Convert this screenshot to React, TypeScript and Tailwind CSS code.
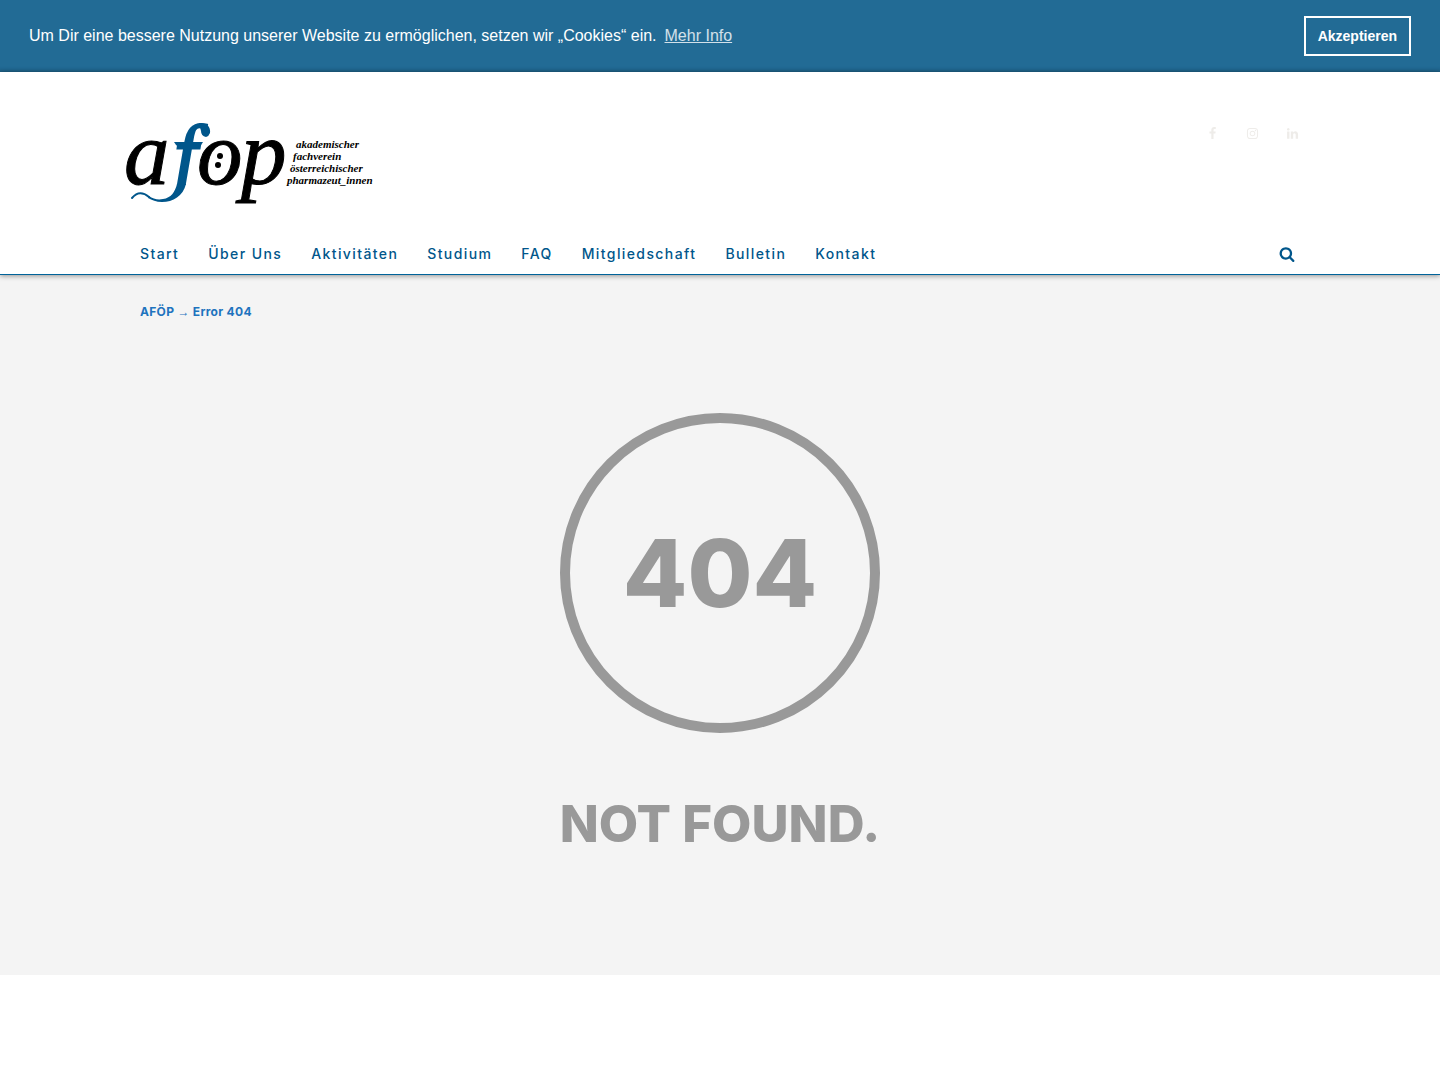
import type { ReactNode } from "react";

const navItems = [
  "Start",
  "Über Uns",
  "Aktivitäten",
  "Studium",
  "FAQ",
  "Mitgliedschaft",
  "Bulletin",
  "Kontakt",
];

const socials = [
  {
    label: "Facebook",
    path: "M1343 12v264h-157q-86 0-116 36t-30 108v189h293l-39 296h-254v759h-306v-759h-255v-296h255v-218q0-186 104-288.5t277-102.5q147 0 228 12z",
  },
  {
    label: "Instagram",
    path: "M1152 896q0-106-75-181t-181-75-181 75-75 181 75 181 181 75 181-75 75-181zm138 0q0 164-115 279t-279 115-279-115-115-279 115-279 279-115 279 115 115 279zm108-410q0 38-27 65t-65 27-65-27-27-65 27-65 65-27 65 27 27 65zm-502-220q-7 0-76.5-.5t-105.5 0-96.5 3-103 10-71.5 18.5q-50 20-88 58t-58 88q-11 29-18.5 71.5t-10 103-3 96.5 0 105.5.5 76.5-.5 76.5 0 105.5 3 96.5 10 103 18.5 71.5q20 50 58 88t88 58q29 11 71.5 18.5t103 10 96.5 3 105.5 0 76.5-.5 76.5.5 105.5 0 96.5-3 103-10 71.5-18.5q50-20 88-58t58-88q11-29 18.5-71.5t10-103 3-96.5 0-105.5-.5-76.5.5-76.5 0-105.5-3-96.5-10-103-18.5-71.5q-20-50-58-88t-88-58q-29-11-71.5-18.5t-103-10-96.5-3-105.5 0-76.5.5zm768 630q0 229-5 317-10 208-124 322t-322 124q-88 5-317 5t-317-5q-208-10-322-124t-124-322q-5-88-5-317t5-317q10-208 124-322t322-124q88-5 317-5t317 5q208 10 322 124t124 322q5 88 5 317z",
  },
  {
    label: "LinkedIn",
    path: "M477 625v991h-330v-991h330zm21-306q1 73-50.5 122t-135.5 49h-2q-82 0-132-49t-50-122q0-74 51.5-122.5t134.5-48.5 133 48.5 51 122.5zm1166 729v568h-329v-530q0-105-40.5-164.5t-126.5-59.5q-63 0-105.5 34.5t-63.5 85.5q-11 30-11 81v553h-329q2-399 2-647t-1-296l-1-48h329v144h-2q20-32 41-56t56.5-52 87-43.5 114.5-15.5q171 0 275 113.5t104 332.5z",
  },
];

const searchPath =
  "M1216 832q0-185-131.5-316.5t-316.5-131.5-316.5 131.5-131.5 316.5 131.5 316.5 316.5 131.5 316.5-131.5 131.5-316.5zm512 832q0 52-38 90t-90 38q-54 0-90-38l-343-342q-179 124-399 124-143 0-273.5-55.5t-225-150-150-225-55.5-273.5 55.5-273.5 150-225 225-150 273.5-55.5 273.5 55.5 225 150 150 225 55.5 273.5q0 220-124 399l343 343q37 37 37 90z";

function Icon({ path, className }: { path: string; className: string }) {
  return (
    <svg viewBox="0 0 1792 1792" fill="currentColor" className={className} aria-hidden="true">
      <path d={path} />
    </svg>
  );
}

function Container({ children, className = "" }: { children: ReactNode; className?: string }) {
  return <div className={`mx-auto max-w-[1190px] ${className}`}>{children}</div>;
}

function Logo() {
  return (
    <svg
      viewBox="0 0 248 80"
      className="h-20 w-[248px] overflow-visible font-['Liberation_Serif',serif] italic"
      role="img"
      aria-label="aföp"
    >
      <g fill="#00568b">
        <text x="49" y="62" fontSize="84" stroke="#00568b" strokeWidth="2">
          f
        </text>
        {/* crossbar bowl, drop at the top, wave that runs into the foot */}
        <path d="M49 20q3 6 11 7h8q7-1 10-7z" />
        <path d="M74 1q12 0 11 10-1 3-4 4-5-1-5-6z" />
        <path d="M44 63h22v20H44z" fill="#fff" />
        <path
          d="M7 76c5-6 11-6 17-1"
          fill="none"
          stroke="#00568b"
          strokeWidth="2"
          strokeLinecap="round"
        />
        <path d="M61 62C58 74 48 80 37 80C31 80 27 78 23 76L24 74C28 77 33 78 38 77C46 76 50 70 52 62z" />
      </g>
      <g fontSize="91" stroke="#000" strokeWidth="1">
        <text x="-1" y="62">a</text>
        <text x="72" y="62">o</text>
        <text x="116" y="62">p</text>
      </g>
      <circle cx="95" cy="34" r="3" />
      <circle cx="93" cy="43" r="3" />
      <g fontSize="11" fontWeight="700">
        <text x="171" y="26">akademischer</text>
        <text x="168" y="38">fachverein</text>
        <text x="165" y="50">österreichischer</text>
        <text x="162" y="62">pharmazeut_innen</text>
      </g>
    </svg>
  );
}

function CookieBar() {
  return (
    <div className="flex items-center justify-between bg-[#226b95] px-[29px] py-4 font-['Liberation_Sans',sans-serif] text-white shadow-[inset_0_-8px_4px_-7px_#1b5578]">
      <p className="text-base">
        Um Dir eine bessere Nutzung unserer Website zu ermöglichen, setzen wir „Cookies“ ein.
        <a href="#info" className="ml-2 text-white/80 underline">
          Mehr Info
        </a>
      </p>
      <button type="button" className="h-10 border-2 border-white px-3 text-sm font-bold">
        Akzeptieren
      </button>
    </div>
  );
}

export default function App() {
  return (
    <div className="bg-white font-['Inter',sans-serif]">
      <CookieBar />

      <header className="relative border-b border-[#00639a] bg-white pt-[50px] shadow-[0_1px_5px_rgba(0,0,0,0.4)]">
        <Container className="flex items-start justify-between">
          <a href="#start">
            <Logo />
          </a>
          <div className="flex pr-[3px]">
            {socials.map((s) => (
              <a
                key={s.label}
                href="#social"
                aria-label={s.label}
                className="flex h-[22px] w-10 items-center justify-center text-[#eeece9]"
              >
                <Icon path={s.path} className="size-[13px]" />
              </a>
            ))}
          </div>
        </Container>
        <Container className="flex items-center justify-between pt-9 pr-5 pb-1 pl-[15px] text-[#00568b]">
          <nav className="flex gap-[29px] text-sm font-medium tracking-widest">
            {navItems.map((item) => (
              <a key={item} href="#nav">
                {item}
              </a>
            ))}
          </nav>
          <button type="button" aria-label="Suche" className="flex h-8 items-center">
            <Icon path={searchPath} className="size-4" />
          </button>
        </Container>
      </header>

      <main className="bg-[#f4f4f4] pt-[27px] pb-[120px]">
        <Container className="px-[15px] text-xs leading-5 font-bold tracking-wide text-[#1e73be]">
          <a href="#start">AFÖP</a>{" "}
          <span className="font-['Liberation_Sans',sans-serif]">→</span> Error 404
        </Container>
        <div className="flex flex-col items-center pt-[91px] font-extrabold text-[#999]">
          <h1 className="flex size-80 items-center justify-center rounded-full border-10 border-[#999] text-[94px]">
            404
          </h1>
          <h2 className="pt-[60px] text-[51px] leading-[62px]">NOT FOUND.</h2>
        </div>
      </main>
    </div>
  );
}
